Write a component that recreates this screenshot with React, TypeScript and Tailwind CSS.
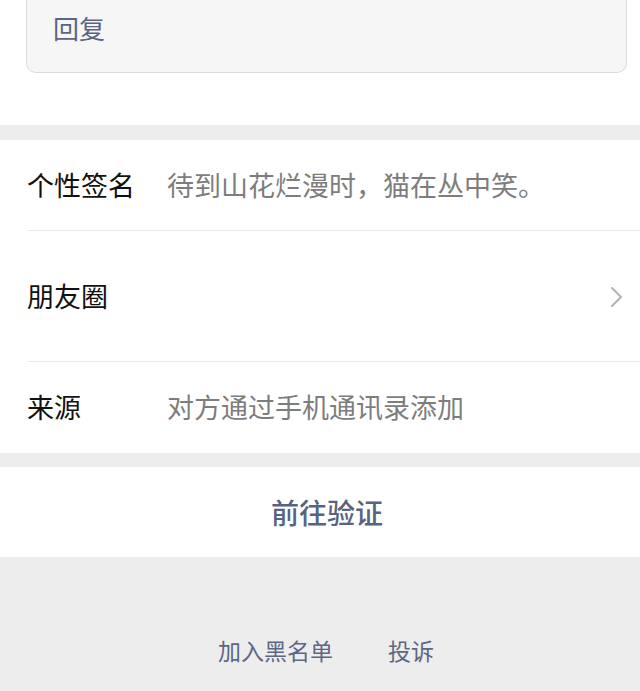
const font = { fontFamily: '"Noto Sans CJK SC", "Noto Sans", sans-serif' };

function Chevron() {
  return (
    <svg width="14" height="22" viewBox="0 0 14 22" fill="none">
      <polyline points="2,2 11,11 2,20" stroke="#b3b3b3" strokeWidth="2" strokeLinecap="round" strokeLinejoin="round" />
    </svg>
  );
}

function Row({
  label,
  value,
  arrow,
  tall,
  divider,
}: {
  label: string;
  value?: string;
  arrow?: boolean;
  tall?: boolean;
  divider?: boolean;
}) {
  return (
    <div className={`relative flex items-center pl-[27px] pr-[16px] ${tall ? "h-[131px]" : "h-[91px]"}`}>
      <span className="w-[140px] shrink-0 text-[27px] text-[#111]">{label}</span>
      {value && <span className="flex-1 text-[27px] text-[#7d7d7d]">{value}</span>}
      {arrow && (
        <span className="ml-auto">
          <Chevron />
        </span>
      )}
      {divider && <div className="absolute bottom-0 left-[28px] right-0 h-px bg-[#e9e9e9]" />}
    </div>
  );
}

export default function App() {
  return (
    <div className="w-[640px] h-[691px] overflow-hidden bg-[#ededed] flex flex-col" style={font}>
      <div className="bg-white pb-[52px]">
        <div className="ml-[26px] mr-[13px] h-[73px] flex items-end pb-[25px] pl-[26px] bg-[#f6f6f6] border-x border-b border-[#dcdcdc] rounded-b-[10px]">
          <span className="text-[26px] text-[#5b6580]">回复</span>
        </div>
      </div>

      <div className="h-[15px]" />

      <div className="bg-white">
        <Row label="个性签名" value="待到山花烂漫时，猫在丛中笑。" divider />
        <Row label="朋友圈" arrow tall divider />
        <Row label="来源" value="对方通过手机通讯录添加" />
      </div>

      <div className="h-[14px]" />

      <div className="bg-white h-[90px] flex items-center justify-center pl-[14px]">
        <span className="text-[28px] font-medium text-[#576382]">前往验证</span>
      </div>

      <div className="flex-1 flex items-end justify-center gap-[55px] pb-[24px] pl-[12px]">
        <span className="text-[23px] text-[#5d6784]">加入黑名单</span>
        <span className="text-[23px] text-[#5d6784]">投诉</span>
      </div>
    </div>
  );
}
